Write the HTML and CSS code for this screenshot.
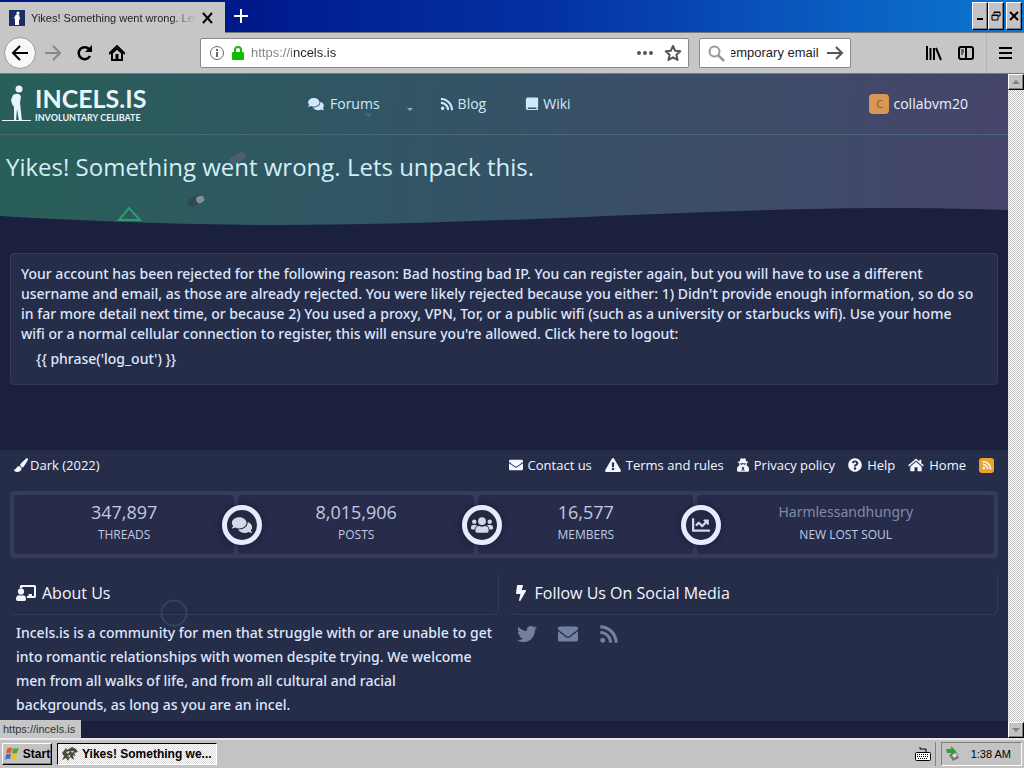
FILE: index.html
```
<!DOCTYPE html>
<html lang="en">
<head>
<meta charset="utf-8">
<title>Yikes! Something went wrong. Lets unpack this.</title>
<link rel="stylesheet" href="styles.css">
</head>
<body>
<svg class="defs" aria-hidden="true">
  <symbol id="comments" viewBox="0 0 576 512"><path d="M416 192c0-88.400-93.100-160-208-160S0 103.600 0 192c0 34.300 14.100 65.900 38 92-13.400 30.200-35.500 54.200-35.800 54.500-2.200 2.300-2.800 5.700-1.500 8.700S4.800 352 8 352c36.600 0 66.900-12.300 88.700-25 32.200 15.700 70.300 25 111.300 25 114.900 0 208-71.600 208-160zm122 220c23.900-26 38-57.700 38-92 0-66.900-53.500-124.200-129.300-148.100.9 6.600 1.300 13.300 1.300 20.100 0 105.900-107.700 192-240 192-10.800 0-21.300-.8-31.700-1.900C207.800 439.600 281.800 480 368 480c41 0 79.100-9.200 111.300-25 21.800 12.700 52.100 25 88.700 25 3.200 0 6.100-1.900 7.300-4.800 1.300-2.900.7-6.300-1.500-8.700-.3-.3-22.400-24.200-35.800-54.500z"/></symbol>
  <symbol id="rss" viewBox="0 0 448 512"><path d="M128.081 415.959c0 35.369-28.672 64.041-64.041 64.041S0 451.328 0 415.959s28.672-64.041 64.041-64.041 64.040 28.673 64.040 64.041zm175.660 47.250c-8.354-154.600-132.185-278.587-286.950-286.950C7.656 175.765 0 183.105 0 192.253v48.069c0 8.415 6.490 15.472 14.887 16.018 111.832 7.284 201.473 96.702 208.772 208.772.547 8.397 7.604 14.887 16.018 14.887h48.069c9.149.001 16.489-7.655 15.995-16.790zm144.249.288C439.596 229.677 251.465 40.445 16.503 32.010 7.473 31.686 0 38.981 0 48.016v48.068c0 8.625 6.835 15.645 15.453 15.999 191.179 7.839 344.627 161.316 352.465 352.465.353 8.618 7.373 15.453 15.999 15.453h48.068c9.034-.001 16.329-7.474 16.005-16.504z"/></symbol>
  <symbol id="book" viewBox="0 0 448 512"><path fill-rule="evenodd" d="M64 16h352q32 0 32 32v310q0 16-10 24v58q10 4 10 20t-16 16H96Q0 496 0 400V80Q0 16 64 16zM96 384q-34 0-34 28t34 28h290v-56z"/></symbol>
  <symbol id="mail" viewBox="0 0 512 512"><path d="M502.300 190.800c3.900-3.100 9.700-.2 9.700 4.700V400c0 26.500-21.500 48-48 48H48c-26.500 0-48-21.500-48-48V195.600c0-5 5.700-7.800 9.700-4.700 22.400 17.400 52.100 39.500 154.100 113.600 21.100 15.400 56.700 47.800 92.200 47.600 35.700.3 72-32.800 92.300-47.600 102-74.100 131.600-96.300 154-113.700zM256 320c23.200.4 56.600-29.200 73.400-41.400 132.700-96.300 142.800-104.700 173.400-128.700 5.800-4.500 9.200-11.500 9.200-18.900v-19c0-26.500-21.500-48-48-48H48c-26.500 0-48 21.500-48 48v19c0 7.400 3.400 14.300 9.200 18.900 30.600 23.900 40.700 32.400 173.400 128.700 16.800 12.200 50.200 41.800 73.400 41.400z"/></symbol>
  <symbol id="twitter" viewBox="0 0 512 512"><path d="M459.370 151.716c.325 4.548.325 9.097.325 13.645 0 138.720-105.583 298.558-298.558 298.558-59.452 0-114.680-17.219-161.137-47.106 8.447.974 16.568 1.299 25.340 1.299 49.055 0 94.213-16.568 130.274-44.832-46.132-.975-84.792-31.188-98.112-72.772 6.498.974 12.995 1.624 19.818 1.624 9.421 0 18.843-1.300 27.614-3.573-48.081-9.747-84.143-51.980-84.143-102.985v-1.299c13.969 7.797 30.214 12.670 47.431 13.319-28.264-18.843-46.781-51.005-46.781-87.391 0-19.492 5.197-37.360 14.294-52.954 51.655 63.675 129.300 105.258 216.365 109.807-1.624-7.797-2.599-15.918-2.599-24.040 0-57.828 46.782-104.934 104.934-104.934 30.213 0 57.502 12.670 76.670 33.137 23.715-4.548 46.456-13.320 66.599-25.340-7.798 24.366-24.366 44.833-46.132 57.827 21.117-2.273 41.584-8.122 60.426-16.243-14.292 20.791-32.161 39.308-52.628 54.253z"/></symbol>
  <symbol id="bolt" viewBox="0 0 320 512"><path d="M296 160H180.600l42.600-129.800C227.200 15 215.700 0 200 0H56C44 0 33.800 8.900 32.200 20.800l-32 240C-1.700 275.200 9.500 288 24 288h118.700L96.600 482.500c-3.600 15.200 8 29.500 23.300 29.500 8.400 0 16.400-4.400 20.800-12l176-304c9.300-15.900-2.200-36-20.700-36z"/></symbol>
  <symbol id="help" viewBox="0 0 512 512"><path d="M504 256c0 136.997-111.043 248-248 248S8 392.997 8 256C8 119.083 119.043 8 256 8s248 111.083 248 248zM262.655 90c-54.497 0-89.255 22.957-116.549 63.758-3.536 5.286-2.353 12.415 2.715 16.258l34.699 26.310c5.205 3.947 12.621 3.008 16.665-2.122 17.864-22.658 30.113-35.797 57.303-35.797 20.429 0 45.698 13.148 45.698 32.958 0 14.976-12.363 22.667-32.534 33.976C247.128 238.528 216 254.941 216 296v4c0 6.627 5.373 12 12 12h56c6.627 0 12-5.373 12-12v-1.333c0-28.462 83.186-29.647 83.186-106.667 0-58.002-60.165-102-116.531-102zM256 338c-25.365 0-46 20.635-46 46 0 25.364 20.635 46 46 46s46-20.636 46-46c0-25.365-20.635-46-46-46z"/></symbol>
  <symbol id="chart" viewBox="0 0 512 512"><path d="M496 384H64V80c0-8.840-7.160-16-16-16H16C7.160 64 0 71.160 0 80v336c0 17.670 14.330 32 32 32h464c8.840 0 16-7.160 16-16v-32c0-8.840-7.160-16-16-16zM464 96H345.940c-21.380 0-32.090 25.850-16.970 40.970l32.400 32.400L288 242.750l-73.370-73.370c-12.500-12.500-32.760-12.500-45.250 0l-68.690 68.690c-6.250 6.250-6.250 16.380 0 22.630l22.620 22.620c6.250 6.250 16.380 6.250 22.630 0L192 237.250l73.370 73.370c12.500 12.500 32.760 12.500 45.250 0l96-96 32.400 32.400c15.120 15.120 40.970 4.410 40.970-16.970V112c.01-8.840-7.150-16-15.990-16z"/></symbol>
  <symbol id="users" viewBox="0 0 640 512"><circle cx="96" cy="160" r="64"/><circle cx="544" cy="160" r="64"/><circle cx="320" cy="144" r="112"/><path d="M64 256h64q28 0 46 20-62 34-74 108H32q-32 0-32-32v-32q0-64 64-64zM576 256h-64q-28 0-46 20 62 34 74 108h68q32 0 32-32v-32q0-64-64-64zM243 288q77 34 154 0 115 0 115 115v29q0 48-48 48H176q-48 0-48-48v-29q0-115 115-115z"/></symbol>
  <symbol id="warn" viewBox="0 0 576 512"><path fill-rule="evenodd" d="M570 440c18 32-5 72-42 72H48c-37 0-60-40-42-72L246 24c19-32 65-32 84 0zM288 354a46 46 0 1 0 0 92 46 46 0 0 0 0-92zM244 165l8 160h72l8-160z"/></symbol>
  <symbol id="spy" viewBox="0 0 448 512"><path fill-rule="evenodd" d="M100 128 130 26q10-36 50-18l44 18 44-18q40-18 50 18l30 102h68v40h-50v40l-6 62q88 24 88 130v60q0 52-50 52H50q-50 0-50-52v-60q0-106 88-130l-6-62v-40H32v-40zM126 190l14 52q34 24 60-14h48q28 38 60 14l14-52zM160 320l34 40-24 110h34l20-80 20 80h34l-24-110 34-40-64 20z"/></symbol>
  <symbol id="house" viewBox="0 0 576 512"><path d="M288 22 410 126V64h72v124l94 80-34 42L288 94 34 310 0 268zM288 140l208 176v164H342V338H234v142H80V316z"/></symbol>
  <symbol id="brush" viewBox="0 0 512 512"><path d="M490 8q30 20 18 62L368 300q-30 42-76 48l-70-76q0-42 30-72L440 14q26-20 50-6zM200 292l78 80q-16 140-158 140Q0 512 0 410q40 30 66-18 32-100 134-100z"/></symbol>
  <symbol id="teacher" viewBox="0 0 640 512"><circle cx="160" cy="210" r="100"/><path d="M104 330q56 24 112 0 104 4 104 120 0 62-50 62H50q-50 0-50-62 0-116 104-120zM170 0h420q50 0 50 50v320q0 46-50 46H360l-24-64h64v-64h112v64h64V64H206v48q-34-14-84-4V48q0-48 48-48z"/></symbol>
</svg>

<header class="tabs">
  <div class="tab">
    <svg class="favicon" viewBox="0 0 16 16"><path fill="#1c2d64" d="M0 0h16v16H0z"/><circle cx="9" cy="3" r="1.600" fill="#fff"/><path fill="#fff" d="M7 4.500h3l1 4-1 2V15H6V9l-1-1z"/></svg>
    <span class="tab-title">Yikes! Something went wrong. Lets</span>
    <button class="bare" aria-label="Close tab"><svg width="12" height="12" viewBox="0 0 12 12"><path d="m1 1 9 10M10 1 1 11" fill="none" stroke="#000" stroke-width="2"/></svg></button>
  </div>
  <button class="bare new-tab" aria-label="New tab"><svg width="14" height="14" viewBox="0 0 14 14"><path d="M7 0v14M0 7h14" stroke="#fff" stroke-width="2"/></svg></button>
  <div class="window-buttons">
    <button class="bevel" aria-label="Minimize"><svg viewBox="0 0 10 10"><path d="M2 8h6" stroke="#000" stroke-width="2"/></svg></button>
    <button class="bevel" aria-label="Restore"><svg viewBox="0 0 10 10"><path d="M3 3V1h6v4H7M1 4h6v5H1zM3 1.500h6M1 4.500h6" fill="none" stroke="#000"/></svg></button>
    <button class="bevel close" aria-label="Close"><svg viewBox="0 0 10 10"><path d="m1 1 8 8M9 1 1 9" stroke="#000" stroke-width="2"/></svg></button>
  </div>
</header>

<nav class="toolbar" aria-label="Browser">
  <div class="history">
    <button class="bare back" aria-label="Back"><svg width="18" height="16" viewBox="0 0 18 16"><path d="M9 1 2 8l7 7M2 8h15" fill="none" stroke="#000" stroke-width="2"/></svg></button>
    <button class="bare" aria-label="Forward"><svg width="16" height="16" viewBox="0 0 16 16"><path d="m8 1 7 7-7 7M15 8H0" fill="none" stroke="#888" stroke-width="2"/></svg></button>
    <button class="bare" aria-label="Reload"><svg width="16" height="16" viewBox="0 0 16 16"><path d="M12.500 4.500A6 6 0 1 0 13 11" fill="none" stroke="#000" stroke-width="2.500"/><path d="M15 0v7H8z"/></svg></button>
    <button class="bare" aria-label="Home"><svg width="16" height="16" viewBox="0 0 16 16"><path d="m0 9 8-8 8 8" fill="none" stroke="#000" stroke-width="2"/><path d="M3 8v7h10V8L8 3.500z" fill="none" stroke="#000" stroke-width="2"/><path d="M6.500 9h3v6h-3z"/></svg></button>
  </div>
  <div class="field address">
    <svg width="16" height="16" viewBox="0 0 16 16"><circle cx="8" cy="8" r="6.500" fill="none" stroke="#666"/><path d="M7 7h2v5H7zM7 4h2v2H7z" fill="#666"/></svg>
    <svg width="12" height="16" viewBox="0 0 12 16"><path d="M3 8V5a3 3 0 0 1 6 0v3" fill="none" stroke="#12bc00" stroke-width="2"/><rect y="7" width="12" height="8" rx="1" fill="#12bc00"/></svg>
    <input class="url" aria-label="Address" value="https://incels.is">
    <button class="bare" aria-label="Page actions"><svg width="16" height="16" viewBox="0 0 16 16"><circle cx="2" cy="8" r="2"/><circle cx="8" cy="8" r="2"/><circle cx="14" cy="8" r="2"/></svg></button>
    <button class="bare" aria-label="Bookmark"><svg width="18" height="18" viewBox="0 0 18 18"><path d="m9 2 2.100 4.700 5.200.6-3.900 3.500 1.100 5.100L9 13.300l-4.500 2.600 1.100-5.100-3.900-3.500 5.200-.6z" fill="none" stroke="#555" stroke-width="2" stroke-linejoin="round"/></svg></button>
  </div>
  <div class="field search">
    <svg width="17" height="17" viewBox="0 0 17 17"><circle cx="6.500" cy="6.500" r="5" fill="none" stroke="#999" stroke-width="2"/><path d="m10 10 6 6" stroke="#999" stroke-width="2.500"/></svg>
    <input aria-label="Search" value="emporary email">
    <button class="bare" aria-label="Search"><svg width="17" height="16" viewBox="0 0 17 16"><path d="m9 2 6 6-6 6M15 8H0" fill="none" stroke="#555" stroke-width="2"/></svg></button>
  </div>
  <div class="tools">
    <button class="bare" aria-label="Library"><svg width="16" height="16" viewBox="0 0 16 16"><path d="M1 1v14M4.500 3v12M8 3v12M10 3l5 12" stroke="#000" stroke-width="2"/></svg></button>
    <button class="bare" aria-label="Sidebars"><svg width="16" height="16" viewBox="0 0 16 16"><rect x="1" y="2" width="14" height="12" rx="2" fill="none" stroke="#000" stroke-width="2"/><path d="M8 2v12" stroke="#000" stroke-width="2"/><path d="M3 5h3M3 7h3M3 9h2" stroke="#000"/></svg></button>
    <button class="bare menu" aria-label="Menu"><svg width="13" height="12" viewBox="0 0 13 12"><path d="M0 1h13M0 6h13M0 11h13" stroke="#000" stroke-width="2"/></svg></button>
  </div>
</nav>

<div class="viewport">
  <div class="page">
    <header class="hero">
      <div class="site-bar">
        <a class="logo" href="#">
          <svg width="30" height="38" viewBox="0 0 30 38"><circle cx="17" cy="4" r="3.500"/><path d="M11 10q5-3 8 1l-1 7 2 18h-3l-2-12-1 12H9l3-1V22l-2-3-1-4z"/><path d="M0 35h29v1H0z"/></svg>
          <span class="logo-text"><strong>INCELS.IS</strong><small>INVOLUNTARY CELIBATE</small></span>
        </a>
        <nav class="site-nav" aria-label="Site">
          <a href="#"><svg class="icon wide"><use href="#comments"/></svg>Forums</a>
          <button class="bare caret" aria-label="Forums menu"><svg width="6" height="3" viewBox="0 0 6 3"><path d="M0 0h6L3 3z"/></svg></button>
          <a class="blog" href="#"><svg class="icon"><use href="#rss"/></svg>Blog</a>
          <a class="wiki" href="#"><svg class="icon"><use href="#book"/></svg>Wiki</a>
        </nav>
        <a class="account" href="#"><span class="avatar">C</span>collabvm20</a>
      </div>
      <h1>Yikes! Something went wrong. Lets unpack this.</h1>
      <svg class="specks" width="400" height="115" viewBox="0 0 400 115"><path d="m119 112 10-12 11 12z" fill="none" stroke="#2f9b70" stroke-width="2"/><rect x="187" y="89" width="17" height="8" rx="4" transform="rotate(-28 195 93)" fill="#314552"/><rect x="196" y="88" width="8" height="7" rx="3" transform="rotate(-28 200 91)" fill="#828f98"/><path d="M364 5h9l-4 5z" fill="#47646b"/><rect x="229" y="46" width="17" height="8" rx="4" transform="rotate(-28 238 50)" fill="#48616b"/></svg>
      <svg class="wave" viewBox="0 0 1008 20" preserveAspectRatio="none"><path fill="#1a203d" d="M0 8C100 14 200 17 280 17 480 17 720 0 890 0c40 0 90 1 118 2v18H0z"/></svg>
    </header>

    <main class="message">
      <p>Your account has been rejected for the following reason: Bad hosting bad IP. You can register again, but you will have to use a different<br> username and email, as those are already rejected. You were likely rejected because you either: 1) Didn't provide enough information, so do so<br> in far more detail next time, or because 2) You used a proxy, VPN, Tor, or a public wifi (such as a university or starbucks wifi). Use your home<br> wifi or a normal cellular connection to register, this will ensure you're allowed. Click here to logout:</p>
      <a href="#">{{ phrase('log_out') }}</a>
    </main>

    <footer class="footer">
      <div class="footer-links">
        <a class="style" href="#"><svg class="icon"><use href="#brush"/></svg>Dark (2022)</a>
        <a href="#"><svg class="icon"><use href="#mail"/></svg>Contact us</a>
        <a href="#"><svg class="icon wide"><use href="#warn"/></svg>Terms and rules</a>
        <a href="#"><svg class="icon slim"><use href="#spy"/></svg>Privacy policy</a>
        <a href="#"><svg class="icon"><use href="#help"/></svg>Help</a>
        <a href="#"><svg class="icon wide"><use href="#house"/></svg>Home</a>
        <a class="feed" href="#" aria-label="RSS"><svg class="icon"><use href="#rss"/></svg></a>
      </div>
      <dl class="stats">
        <div><dd>347,897</dd><dt>THREADS</dt><span class="badge"><svg><use href="#comments"/></svg></span></div>
        <div><dd>8,015,906</dd><dt>POSTS</dt><span class="badge"><svg><use href="#users"/></svg></span></div>
        <div><dd>16,577</dd><dt>MEMBERS</dt><span class="badge"><svg><use href="#chart"/></svg></span></div>
        <div><dd><a href="#">Harmlessandhungry</a></dd><dt>NEW LOST SOUL</dt></div>
      </dl>
      <div class="columns">
        <section>
          <h2><svg class="head-icon"><use href="#teacher"/></svg>About Us</h2>
          <p>Incels.is is a community for men that struggle with or are unable to get<br> into romantic relationships with women despite trying. We welcome<br> men from all walks of life, and from all cultural and racial<br> backgrounds, as long as you are an incel.</p>
          <svg class="ring" width="28" height="28" viewBox="0 0 28 28"><circle cx="14" cy="14" r="12.500"/></svg>
        </section>
        <section>
          <h2><svg class="head-icon bolt"><use href="#bolt"/></svg>Follow Us On Social Media</h2>
          <div class="social">
            <a href="#" aria-label="Twitter"><svg><use href="#twitter"/></svg></a>
            <a href="#" aria-label="Email"><svg><use href="#mail"/></svg></a>
            <a href="#" aria-label="RSS"><svg><use href="#rss"/></svg></a>
          </div>
        </section>
      </div>
    </footer>
  </div>
  <div class="scrollbar">
    <button class="bevel" aria-label="Scroll up"><svg viewBox="0 0 10 10"><path d="M1 7h8L5 3z" fill="#808080"/></svg></button>
    <button class="bevel" aria-label="Scroll down"><svg viewBox="0 0 10 10"><path d="M1 3h8L5 7z" fill="#808080"/></svg></button>
  </div>
  <div class="status">https://incels.is</div>
</div>

<footer class="taskbar">
  <button class="bevel start"><svg width="16" height="16" viewBox="0 0 16 16"><path fill="#e05a25" d="M3 3q2-2 5-1L7 7Q4 6 2 8z"/><path fill="#57a639" d="M9 2q3 1 6 0l-2 5q-2 1-5 0z"/><path fill="#3b6fc9" d="M2 9q2-2 5-1l-1 5q-3-1-5 1z"/><path fill="#f0bd27" d="M8 8q3 1 5 0l-1 5q-3 2-5 0z"/></svg>Start</button>
  <button class="task"><svg width="16" height="16" viewBox="0 0 16 16"><path fill="#4c4a3c" d="m0 7 4-5 1 2 5-3 4 2 2 3-4 1 2 3-3-1 1 5-4-3-2 4-2-3-4 2 2-4z"/><path fill="#e8e4cf" d="m4 6 4-1-2 3zM9 5h3l-2 2zM5 10l3-1v2z"/></svg><span>Yikes! Something we...</span></button>
  <div class="tray-icon"><svg width="16" height="14" viewBox="0 0 16 14"><path d="M5 0v2h6v3" fill="none" stroke="#000"/><rect x=".5" y="5.500" width="15" height="8" rx="1" fill="#fff" stroke="#000"/><path d="M2 7.500h12M2 9.500h12M3 11.500h10" stroke="#000" stroke-dasharray="1 1"/></svg></div>
  <div class="clock"><svg width="16" height="16" viewBox="0 0 16 16"><path fill="#777" d="m4 9 7-4 3 7-6 3z"/><path fill="#ddd" d="m7 9 4-2 1 3-3 2z"/><path fill="#29a52b" d="M1 3h5V0l5 5-5 4V7H2z"/></svg><time>1:38 AM</time></div>
</footer>
</body>
</html>
```
FILE: styles.css
```
* { box-sizing: border-box; }

body {
  margin: 0;
  height: 100vh;
  display: flex;
  flex-direction: column;
  overflow: hidden;
  background: #c3c3c3;
  color: #dfe6fb;
  font: 14px/20px "Open Sans", "Noto Sans", sans-serif;
}

a { color: inherit; text-decoration: none; }
h1, h2, p, dl, dd { margin: 0; }
svg { flex: none; fill: currentColor; }
button, input { font: inherit; color: inherit; }
.defs { position: absolute; width: 0; height: 0; }

.bare {
  display: flex;
  align-items: center;
  justify-content: center;
  padding: 0;
  border: 0;
  background: none;
  color: #000;
}

.bevel {
  display: flex;
  align-items: center;
  justify-content: center;
  padding: 0;
  background: #c3c3c3;
  border: 1px solid;
  border-color: #fff #000 #000 #fff;
  box-shadow: inset -1px -1px #808080;
  color: #000;
}

/* Browser chrome */
.tabs {
  display: flex;
  flex: none;
  height: 33px;
  background: linear-gradient(90deg, #001a8c 25%, #0433a4 55%, #0b62c4 85%, #0b77d0);
  border-bottom: 1px solid #777;
  font: 11px/16px "Liberation Sans", sans-serif;
}

.tab {
  display: flex;
  align-items: center;
  gap: 6px;
  width: 225px;
  height: 33px;
  padding: 0 11px 0 9px;
  border-top: 2px solid #001a8c;
  background: #c6c6c6;
  color: #222;
}

.favicon { width: 16px; height: 16px; }

.tab-title {
  flex: 1;
  min-width: 0;
  white-space: nowrap;
  mask-image: linear-gradient(90deg, #000 85%, transparent);
}

.new-tab { width: 32px; }
.window-buttons { display: flex; align-items: flex-start; margin: 2px 2px 0 auto; }
.window-buttons .bevel { width: 16px; height: 28px; }
.window-buttons .close { margin-left: 2px; }
.window-buttons svg { width: 10px; height: 10px; }

.toolbar {
  display: flex;
  flex: none;
  align-items: center;
  height: 41px;
  padding: 0 4px;
  border-bottom: 1px solid #777;
  background: #c6c6c6;
  color: #222;
  font: 13px/16px "Liberation Sans", sans-serif;
}

.history { display: flex; align-items: center; gap: 16px; width: 196px; }
.back {
  width: 32px;
  height: 32px;
  margin-right: -7px;
  border: 1px solid #999;
  border-radius: 50%;
  background: #f7f7f7;
}

.field {
  display: flex;
  align-items: center;
  gap: 6px;
  height: 30px;
  padding: 0 6px 0 8px;
  border: 1px solid #888;
  border-radius: 2px;
  background: #fff;
}

.field input { flex: 1; min-width: 0; padding: 0; border: 0; outline: 0; background: none; }
.address { flex: 1; gap: 7px; }
.address .bare { margin-left: 4px; color: #555; }
.address .url {
  color: transparent;
  background: linear-gradient(90deg, #808080 41px, #222 41px);
  background-clip: text;
}
.search { width: 152px; margin-left: 10px; }
.search input { text-indent: -2px; }

.tools { display: flex; align-items: center; gap: 16px; height: 100%; margin: 0 8px 0 75px; }
.menu { height: 100%; margin-left: -4px; padding-left: 12px; border-left: 1px solid #b3b3b3; }

/* Web page */
.viewport { position: relative; display: flex; flex: 1; min-height: 0; }
.page { flex: 1; min-width: 0; overflow: hidden; background: #1a203d; }

.hero {
  position: relative;
  height: 153px;
  background: linear-gradient(93deg, #285f58, #305664 35%, #394f66 62%, #3f4a68 80%, #46446c);
}

.site-bar {
  display: flex;
  align-items: center;
  height: 61px;
  padding-right: 40px;
  border-bottom: 1px solid #4b6775;
}

.logo { display: flex; align-items: center; gap: 3px; width: 308px; padding-left: 2px; color: #e8f5fb; }
.logo-text { display: flex; flex-direction: column; font-family: Lato, sans-serif; }
.logo-text strong { font-size: 25px; line-height: 28px; }
.logo-text small { font-size: 9px; font-weight: 700; line-height: 12px; }

.site-nav, .site-nav a, .account, .footer-links, .footer-links a { display: flex; align-items: center; }
.site-nav { flex: 1; color: #cfe9fb; }
.site-nav a { gap: 4px; }
.icon { width: 14px; height: 14px; }
.icon.wide { width: 16px; }
.icon.slim { width: 12px; }
.site-nav .wide { margin-right: 2px; }
.caret { margin: 10px 27px 0; color: #8bb3bd; }
.wiki { margin-left: 39px; }
.account { gap: 4px; color: #edf2ff; }
.avatar {
  width: 20px;
  height: 20px;
  border-radius: 4px;
  background: #d89755;
  color: #815329;
  font-size: 10px;
  text-align: center;
}

h1 { padding: 15px 6px; font-size: 24px; font-weight: 400; line-height: 34px; color: #d3eef6; }
.specks { position: absolute; left: 0; bottom: 4px; }
.wave { position: absolute; left: 0; bottom: -1px; width: 100%; height: 20px; }

.message, .columns p { font-family: "Noto Sans", "Open Sans", sans-serif; font-weight: 500; }
.message {
  margin: 26px 10px 65px;
  padding: 10px 10px 15px;
  border: 1px solid #353b58;
  border-radius: 4px;
  background: #262d49;
}
.message a { display: block; padding: 5px 15px 0; }

.footer { padding: 0 10px; background: #262d49; }
.footer-links { gap: 13px; padding: 5px 4px 16px; color: #f4f7ff; font-size: 13px; }
.footer-links a { gap: 5px; }
.footer-links .style { gap: 2px; margin-right: auto; }
.footer-links .feed { justify-content: center; width: 15px; height: 15px; border-radius: 3px; background: #eba32c; }
.feed .icon { width: 10px; height: 10px; }

.stats {
  display: grid;
  grid-template-columns: 222fr 238fr 217fr 299fr;
  gap: 4px;
  padding: 4px;
  border-radius: 4px;
  background: #353c59;
  text-align: center;
}
.stats div {
  position: relative;
  display: flex;
  flex-direction: column;
  height: 59px;
  padding-top: 5px;
  border-radius: 4px;
  background: #272c4a;
}
.stats dd { height: 24px; font-size: 18px; line-height: 24px; color: #c3c9e0; }
.stats dt { font-size: 12px; line-height: 22px; color: #c3c9e0; }
.stats a { display: block; color: #838aa7; font-family: "Noto Sans", sans-serif; font-size: 14px; }
.badge {
  position: absolute;
  top: 10px;
  right: -28px;
  z-index: 1;
  display: flex;
  align-items: center;
  justify-content: center;
  width: 40px;
  height: 40px;
  border: 5px solid #e8ebff;
  border-radius: 50%;
  background: #242943;
  box-shadow: 0 0 8px #171c34;
  color: #d5d6e6;
}
.badge svg { width: 22px; height: 18px; }

.columns { display: grid; grid-template-columns: 1fr 1fr; gap: 11px; margin-top: 14px; }
.columns section { position: relative; }
h2 {
  display: flex;
  align-items: center;
  gap: 6px;
  height: 43px;
  padding-left: 6px;
  border: solid #353c59;
  border-width: 0 1px 1px 0;
  border-radius: 6px;
  color: #f4f7ff;
  font-size: 16px;
  font-weight: 400;
}
.head-icon { width: 20px; height: 16px; }
.head-icon.bolt { width: 10px; margin-right: 3px; }
.columns p { padding: 6px 0 4px 6px; line-height: 24px; }
.ring { position: absolute; left: 150px; top: 27px; fill: none; stroke: #3a4060; stroke-width: 2; }
.social { display: flex; gap: 21px; padding: 9px 7px; color: #7480a0; }
.social svg { display: block; width: 20px; height: 20px; }

.scrollbar {
  display: flex;
  flex: none;
  flex-direction: column;
  justify-content: space-between;
  width: 16px;
  background: repeating-conic-gradient(#fff 0 25%, #c3c3c3 0 50%) 0 0 / 2px 2px;
}
.scrollbar .bevel { width: 16px; height: 16px; }
.scrollbar svg { width: 10px; height: 10px; }

.status {
  position: absolute;
  left: 0;
  bottom: 0;
  padding: 1px 6px 1px 3px;
  background: #c6c6c6;
  color: #333;
  font: 11px/16px "Liberation Sans", sans-serif;
}

/* Taskbar */
.taskbar {
  display: flex;
  flex: none;
  align-items: center;
  gap: 5px;
  height: 30px;
  padding: 0 2px;
  border-top: 2px solid #e8e8e8;
  color: #000;
  font: 11px/16px "Liberation Sans", sans-serif;
}
.start { gap: 3px; width: 50px; height: 22px; font-size: 12px; font-weight: 700; }
.task {
  display: flex;
  align-items: center;
  gap: 4px;
  width: 160px;
  height: 22px;
  padding: 0 4px;
  border: 1px solid;
  border-color: #000 #fff #fff #000;
  background: repeating-conic-gradient(#fff 0 25%, #d8d8d8 0 50%) 0 0 / 2px 2px;
  font-size: 12px;
  font-weight: 700;
  white-space: nowrap;
}
.tray-icon { display: flex; align-items: center; height: 24px; margin-left: auto; padding-right: 4px; border-right: 1px solid #808080; }
.clock {
  display: flex;
  align-items: center;
  gap: 10px;
  height: 24px;
  padding: 0 10px 0 3px;
  border: 1px solid;
  border-color: #808080 #fff #fff #808080;
}
```
